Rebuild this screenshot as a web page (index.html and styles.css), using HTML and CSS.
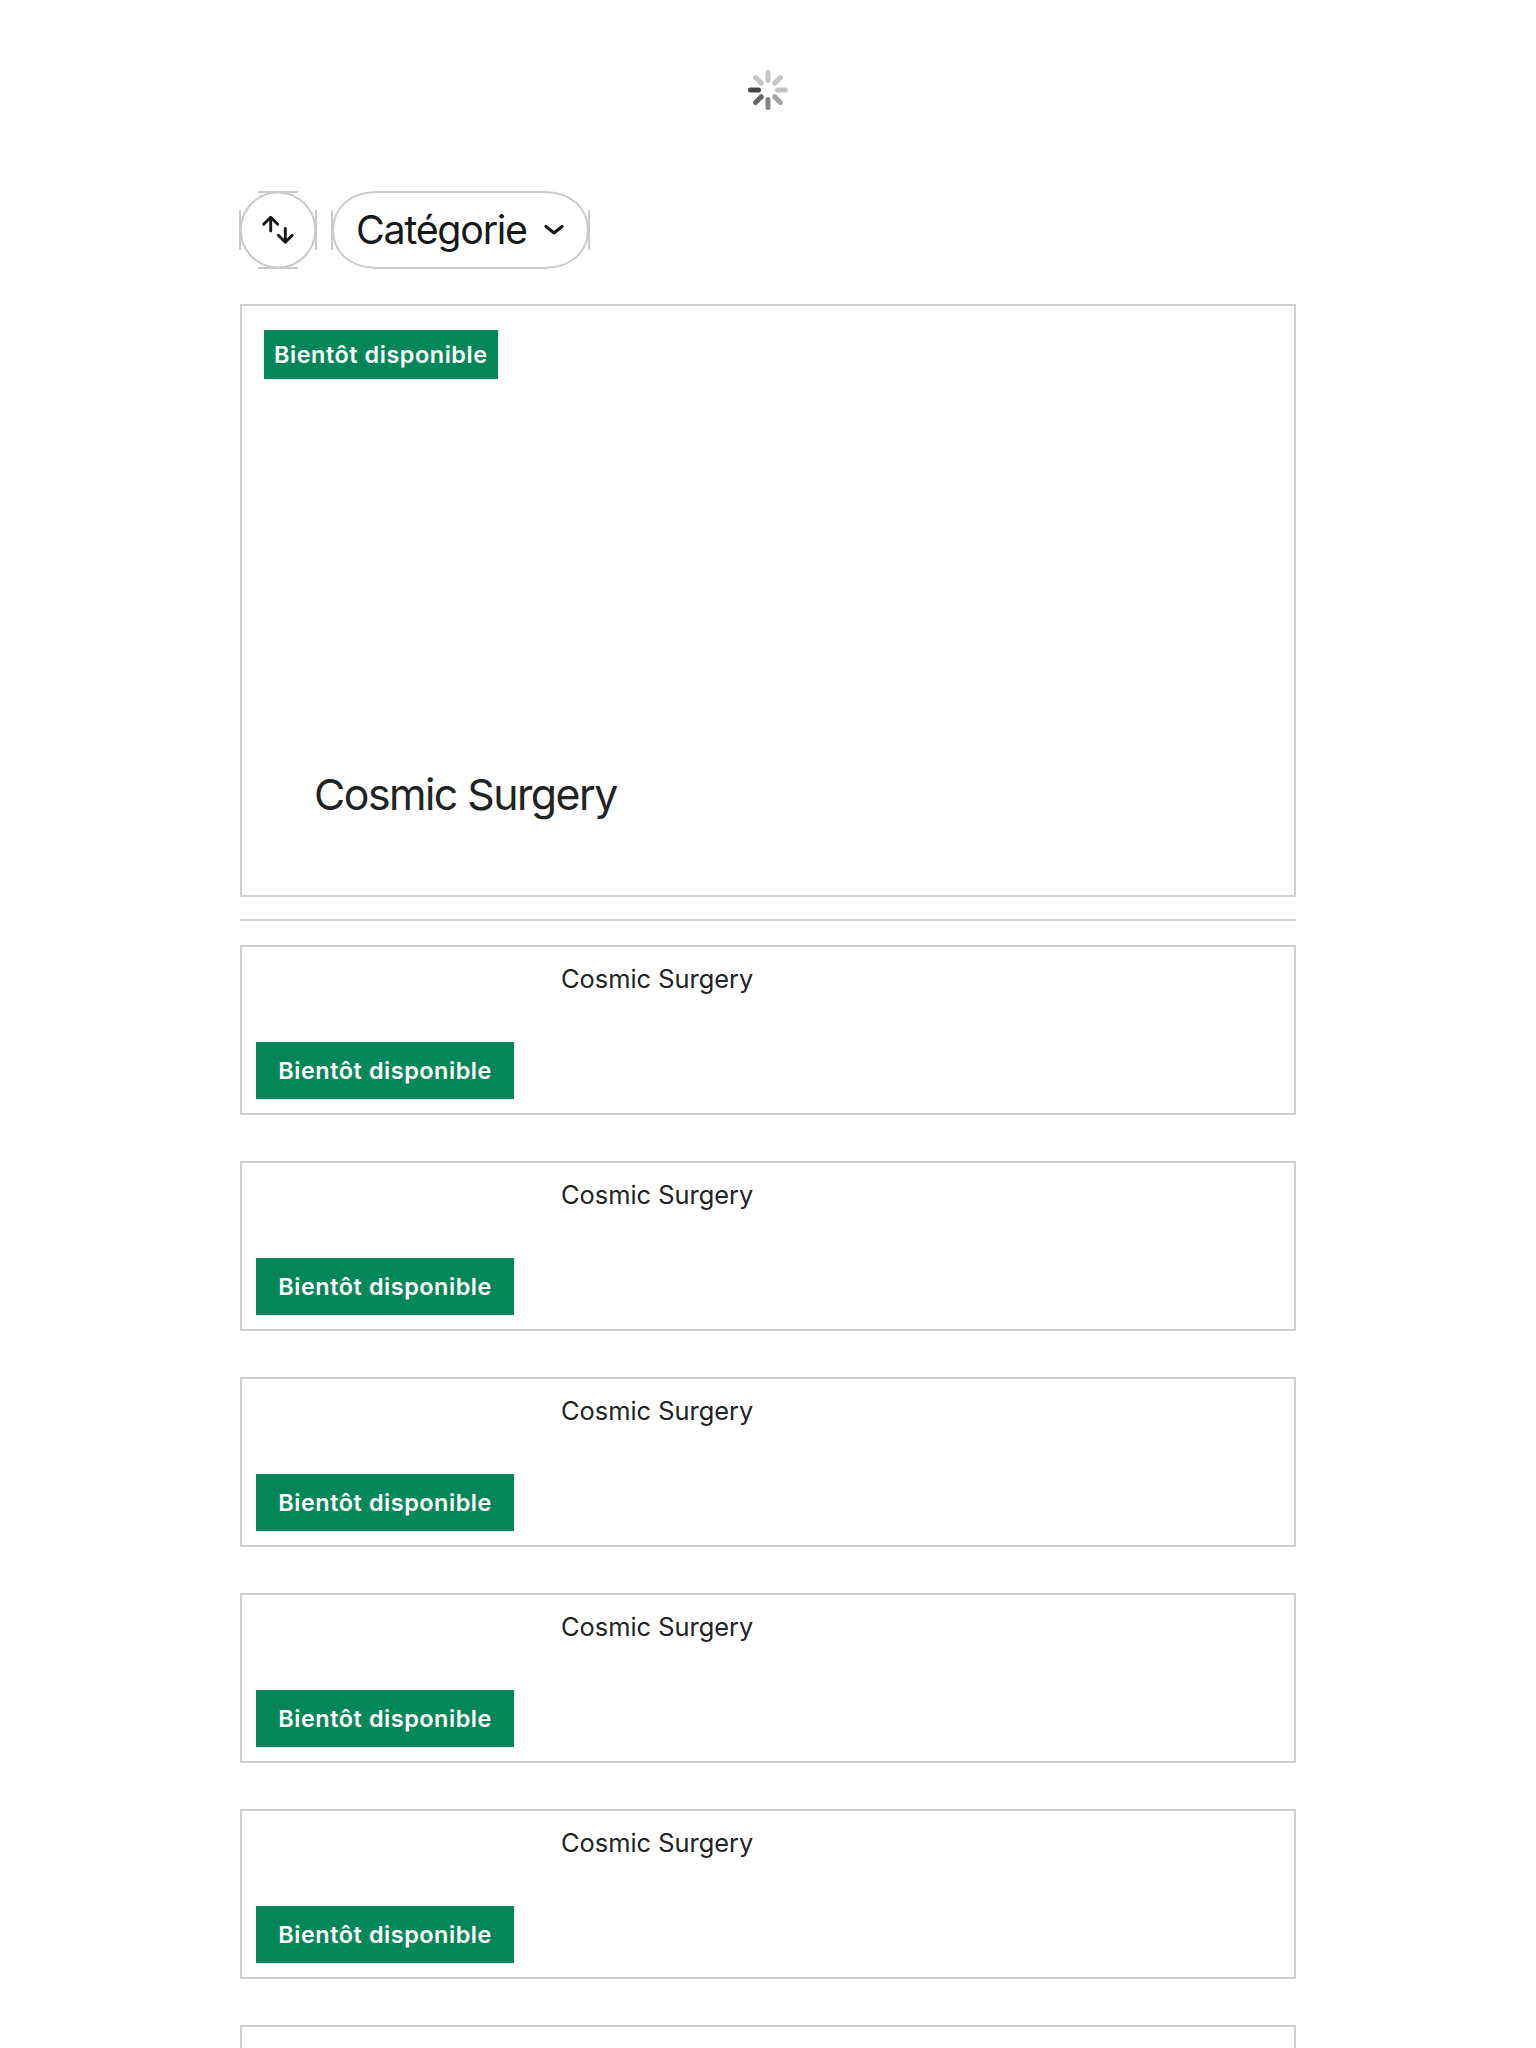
FILE: index.html
```html
<!DOCTYPE html>
<html lang="fr">
<head>
<meta charset="utf-8">
<title>Catalogue</title>
<link rel="stylesheet" href="styles.css">
</head>
<body>
<main class="page">
  <div class="loader">
    <svg width="40" height="40" viewBox="0 0 40 40" fill="none" stroke-width="5" stroke-linecap="round">
      <path stroke="#c4c4c4" d="M20 2.5v8M32.4 7.6l-5.7 5.7M37.5 20h-8M7.6 7.6l5.7 5.7"/>
      <path stroke="#a3a3a3" d="M32.4 32.4l-5.7-5.7"/>
      <path stroke="#858585" d="M20 37.5v-8"/>
      <path stroke="#666" d="M7.6 32.4l5.7-5.7"/>
      <path stroke="#464646" d="M2.5 20h8"/>
    </svg>
  </div>
  <div class="filters">
    <button class="filter sort" aria-label="Trier">
      <svg class="outline" width="78" height="78" viewBox="0 0 78 78" fill="none" stroke="#c9c9c9" stroke-width="2">
        <ellipse cx="39" cy="39" rx="37.3" ry="37.5"/>
        <path d="M1 19v40M77 19v40M19 1h40M19 77h40"/>
      </svg>
      <svg class="arrows" width="78" height="78" viewBox="0 0 78 78" fill="none" stroke="#161818" stroke-width="2.9" stroke-linecap="round" stroke-linejoin="round">
        <path d="M31.7 40V26.5M24.7 33.3l7-7 7 7M46.3 37.5v13M39.3 44.2l7 7 7-7"/>
      </svg>
    </button>
    <button class="filter category">
      <svg class="outline" width="259" height="78" viewBox="0 0 259 78" fill="none" stroke="#c9c9c9" stroke-width="2">
        <path d="M46 1H213C241 1 257 18 257 39S241 77 213 77H46C18 77 2 60 2 39S18 1 46 1Z"/>
        <path d="M1 19v40M258 19v40"/>
      </svg>
      <span class="label">Catégorie</span>
      <svg class="chevron" width="20" height="12" viewBox="0 0 20 12" fill="none" stroke="#161818" stroke-width="3.1" stroke-linecap="round" stroke-linejoin="round"><path d="M2 2.5l8 6.5 8-6.5"/></svg>
    </button>
  </div>
  <article class="featured">
    <span class="badge badge-small">Bientôt disponible</span>
    <h1 class="featured-title">Cosmic Surgery</h1>
  </article>
  <hr class="rule">
  <section class="list">
    <article class="item"><div class="thumb"><span class="badge">Bientôt disponible</span></div><h2 class="item-title">Cosmic Surgery</h2></article>
    <article class="item"><div class="thumb"><span class="badge">Bientôt disponible</span></div><h2 class="item-title">Cosmic Surgery</h2></article>
    <article class="item"><div class="thumb"><span class="badge">Bientôt disponible</span></div><h2 class="item-title">Cosmic Surgery</h2></article>
    <article class="item"><div class="thumb"><span class="badge">Bientôt disponible</span></div><h2 class="item-title">Cosmic Surgery</h2></article>
    <article class="item"><div class="thumb"><span class="badge">Bientôt disponible</span></div><h2 class="item-title">Cosmic Surgery</h2></article>
    <article class="item item-partial"></article>
  </section>
</main>
</body>
</html>
```
FILE: styles.css
```css
* { box-sizing: border-box; }
html, body { margin: 0; background: #fff; }
body { font-family: Inter, "Liberation Sans", sans-serif; color: #212323; }
h1, h2 { margin: 0; font-weight: 400; }
.page { width: 1056px; margin: 0 auto; padding-top: 70px; }
.loader { display: flex; justify-content: center; height: 121px; }
.filters { display: flex; gap: 14px; height: 78px; margin: 0 0 35px -1px; }
.filter { position: relative; display: flex; align-items: center; height: 78px; padding: 0; border: 0; background: none; font: inherit; color: #161818; }
.outline { position: absolute; inset: 0; }
.sort { width: 78px; }
.category { width: 259px; padding-left: 25px; gap: 18px; }
.label { width: 170px; font-size: 39.4px; line-height: 78px; letter-spacing: -1.25px; text-align: left; white-space: nowrap; }
.chevron { flex: none; }
.featured { display: flex; flex-direction: column; align-items: flex-start; justify-content: space-between; height: 593px; padding: 24px 22px 72px; border: 2px solid #d0d0d0; }
.featured-title { margin-left: 50px; font-size: 42.8px; line-height: 56px; letter-spacing: -1.52px; }
.badge { width: 258px; height: 57px; line-height: 57px; background: #038759; color: #fff; font-size: 23.4px; font-weight: 600; letter-spacing: .56px; padding-left: 22.3px; white-space: nowrap; }
.badge-small { width: 234px; height: 49px; line-height: 49px; padding-left: 10px; }
.rule { height: 2px; margin: 22px 0 24px; border: 0; background: #d0d0d0; }
.list { display: flex; flex-direction: column; gap: 46px; }
.item { display: flex; flex: none; height: 170px; border: 2px solid #d0d0d0; }
.item-partial { height: 23px; border-bottom: 0; }
.thumb { display: flex; align-items: flex-end; width: 318px; padding: 0 0 14px 14px; }
.item-title { padding-top: 16px; margin-left: 1px; font-size: 25.4px; line-height: 32px; letter-spacing: 0; }
```
